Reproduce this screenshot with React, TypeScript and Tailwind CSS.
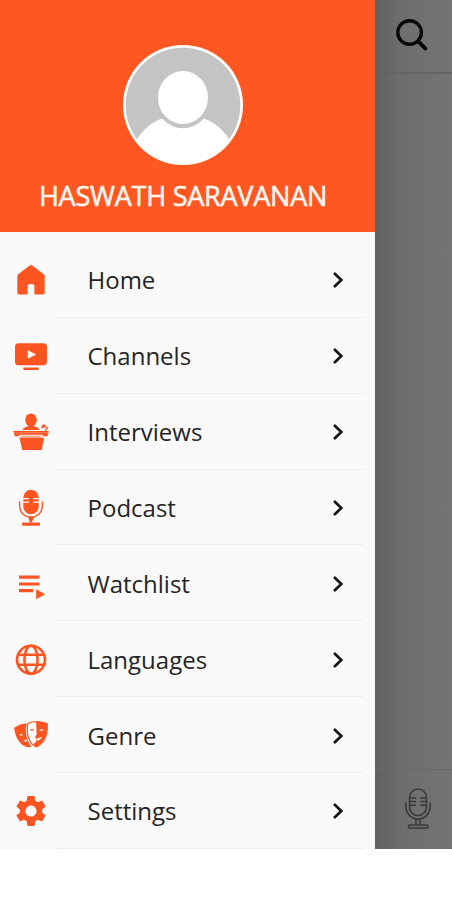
import type { ReactNode } from 'react';

const accent = '#fc5521';

function Icon({ children }: { children: ReactNode }) {
  return (
    <svg className="ml-[11px] h-10 w-10 shrink-0" viewBox="0 0 40 40" fill={accent}>
      {children}
    </svg>
  );
}

const items: { label: string; icon: ReactNode }[] = [
  {
    label: 'Home',
    icon: (
      <path d="M18.4 5.8Q20 4.4 21.6 5.8L32.5 14Q33.7 15 33.7 16.5V32.5Q33.7 34.4 32 34.4H23.4V26Q23.4 23.9 20 23.9T16.6 26V34.4H8Q6.3 34.4 6.3 32.5V16.5Q6.3 15 7.5 14Z" />
    ),
  },
  {
    label: 'Channels',
    icon: (
      <>
        <rect x="4" y="7.3" width="32" height="22" rx="3.6" />
        <rect x="12.3" y="31.6" width="15.6" height="2.4" rx="1" />
        <path d="M16.8 14.2L25.2 18.4L16.8 22.8Z" fill="#fff" />
      </>
    ),
  },
  {
    label: 'Interviews',
    icon: (
      <>
        <ellipse cx="20" cy="8" rx="5.8" ry="6.6" />
        <path d="M11.5 18Q12.3 15.5 17 14.3V12H23V14.3Q28 15.5 28.7 18Z" />
        <path d="M2.2 19H38L36.4 24.2H31.6V22.8H8.4V24.2H3.8Z" />
        <path d="M8.4 25.6H31.6L33 26L30.8 38H11.2L8.6 26Z" />
        <path d="M10 24.2H30" stroke={accent} strokeWidth=".7" />
        <path d="M3 20.7H37" stroke="#ff9c7c" strokeWidth=".6" />
        <path d="M32.4 13.6L36.4 15.8L34 19.5" fill="none" stroke={accent} strokeWidth="1.3" />
        <ellipse cx="32.3" cy="14.2" rx="2.3" ry="1.5" transform="rotate(-32 32.3 14.2)" />
      </>
    ),
  },
  {
    label: 'Podcast',
    icon: (
      <>
        <rect x="12.3" y="1.7" width="15.4" height="24.5" rx="7.7" />
        <path d="M12 10.6H18M12 14.2H18M22 10.6H28M22 14.2H28" stroke="#fafafa" strokeWidth="1.2" />
        <path d="M8.6 14V17.4C8.6 33 31.4 33 31.4 17.4V14" fill="none" stroke={accent} strokeWidth="1.4" strokeLinecap="round" />
        <path d="M17.8 28.5H22.2V31.5L20.8 34.5H19.2L17.8 31.5Z" />
        <rect x="11" y="34.6" width="18" height="3.2" rx=".8" />
      </>
    ),
  },
  {
    label: 'Watchlist',
    icon: (
      <path d="M8 11.6H28.5V14.8H8ZM8 18.4H28.5V21.6H8ZM8 25.1H22V28.3H8ZM25.2 25.2L34.2 30.2L25.2 35.2Z" />
    ),
  },
  {
    label: 'Languages',
    icon: (
      <g fill="none" stroke={accent} strokeWidth="2.6">
        <circle cx="20" cy="19.7" r="14" />
        <ellipse cx="20" cy="19.7" rx="6.6" ry="14" />
        <path d="M7.2 14.7H32.8M7.2 24.7H32.8" />
      </g>
    ),
  },
  {
    label: 'Genre',
    icon: (
      <>
        <path d="M3.2 11.7Q9 7.8 16 7.3C13.8 13 14.4 23.6 20.5 30.5C18 32 13.5 31 9.5 27.2C5.5 23 3.8 17 3.2 11.7Z" />
        <path d="M8 18.8Q9.8 17.3 12 18.9Q10 20.2 8 18.8ZM12.6 25.5Q13.4 23.6 15.3 23.2L16.5 25.5Q14.2 24.8 12.6 25.5Z" fill="#fafafa" />
        <path d="M17.2 7.2Q26 4 36.1 7.6C36.9 16 34.8 26.2 25.3 31C17.4 27.5 14.6 16 17.2 7.2Z" fill="#fff" stroke={accent} strokeWidth="1.2" />
        <path d="M25.1 6Q31 5.5 36 7.6C36.8 16 34.5 26.2 25.5 31L22.2 28.2Q26 26 25.7 22.8L23.5 21.2Q25.5 21 25.6 18Z" />
        <path d="M19 14Q21 12.2 23 14Q21 15.4 19 14Z" />
        <path d="M28.4 14.2Q30.6 12.4 32.8 14.1Q30.6 15.6 28.4 14.2ZM25.8 22.2Q29 22.6 31 20.2Q30 24 26.3 24.8Z" fill="#fff" />
      </>
    ),
  },
  {
    label: 'Settings',
    icon: (
      <path
        transform="translate(1.4 1.4) scale(1.55)"
        d="M19.14 12.94c.04-.3.06-.61.06-.94s-.02-.64-.07-.94l2.03-1.58c.18-.14.23-.41.12-.61l-1.92-3.32c-.12-.22-.37-.29-.59-.22l-2.39.96c-.5-.38-1.03-.7-1.62-.94l-.36-2.54c-.04-.24-.24-.41-.48-.41h-3.84c-.24 0-.43.17-.47.41l-.36 2.54c-.59.24-1.13.57-1.62.94l-2.39-.96c-.22-.08-.47 0-.59.22L2.74 8.87c-.12.21-.08.47.12.61l2.03 1.58c-.05.3-.09.63-.09.94s.02.64.07.94l-2.03 1.58c-.18.14-.23.41-.12.61l1.92 3.32c.12.22.37.29.59.22l2.39-.96c.5.38 1.03.7 1.62.94l.36 2.54c.05.24.24.41.48.41h3.84c.24 0 .44-.17.47-.41l.36-2.54c.59-.24 1.13-.56 1.62-.94l2.39.96c.22.08.47 0 .59-.22l1.92-3.32c.12-.22.07-.47-.12-.61l-2.01-1.58zM12 15.6c-1.98 0-3.6-1.62-3.6-3.6s1.62-3.6 3.6-3.6 3.6 1.62 3.6 3.6-1.62 3.6-3.6 3.6z"
      />
    ),
  },
];

function Avatar() {
  return (
    <svg className="h-[122px] w-[122px]" viewBox="0 0 122 122">
      <defs>
        <clipPath id="face"><circle cx="61" cy="61" r="58" /></clipPath>
      </defs>
      <circle cx="61" cy="61" r="60" fill="#fff" />
      <circle cx="61" cy="61" r="57.3" fill="#c4c4c4" />
      <g clipPath="url(#face)">
        <path d="M12 101C21 81 39 71 61 71S101 81 110 101L100 122H22Z" fill="#fff" />
        <ellipse cx="61" cy="54.5" rx="28" ry="29.8" fill="#c4c4c4" />
        <ellipse cx="61" cy="53.5" rx="25" ry="26.6" fill="#fff" />
      </g>
    </svg>
  );
}

export default function App() {
  return (
    <div className="h-[900px] w-[452px] overflow-hidden bg-white font-['Open_Sans','Noto_Sans',sans-serif]">
      <div className="flex h-[849px]">
        <aside className="flex w-[375px] shrink-0 flex-col bg-[#fafafa]">
          <header className="flex h-[232px] shrink-0 flex-col items-center bg-[#ff5722] pt-[44px] pr-[9px]">
            <Avatar />
            <h1 className="mt-[12px] text-[27px] leading-[36px] tracking-[-0.23px] whitespace-nowrap text-[#fff5ee] [-webkit-text-stroke:0.6px_#fff5ee]">HASWATH SARAVANAN</h1>
          </header>
          <nav className="pt-[10px]">
            {items.map(({ label, icon }) => (
              <div key={label} className="flex h-[75.86px] flex-col">
                <a className="flex min-h-0 flex-1 items-center pt-[2px]">
                  <Icon>{icon}</Icon>
                  <span className="ml-[36.5px] flex-1 text-[24px] leading-[34px] text-[#252525]">{label}</span>
                  <svg className="mr-[25px] h-6 w-6" viewBox="0 0 24 24" fill="none" stroke="#161616" strokeWidth="2.7">
                    <path d="M8 5L15.3 12L8 19" />
                  </svg>
                </a>
                <div className="mr-[10px] ml-[57px] h-px bg-[#eeeeee]" />
              </div>
            ))}
          </nav>
        </aside>
        <div className="flex flex-1 flex-col bg-linear-to-r from-[#606060] via-[#6e6e6e] via-35% to-[#747474]">
          <div className="flex h-[74px] justify-center border-b-2 border-[#646464] pt-[17px] pr-[3px]">
            <svg className="h-9 w-9" viewBox="0 0 36 36" fill="none" stroke="#080808">
              <circle cx="15.6" cy="15.5" r="11.8" strokeWidth="3.4" />
              <path d="M24.2 24.4L31.2 31.4" strokeWidth="4" strokeLinecap="round" />
            </svg>
          </div>
          <div className="flex-1" />
          <div className="flex h-[80px] justify-center border-t border-[#696969] pt-[17px] pl-[8px]">
            <svg className="h-11 w-8" viewBox="0 0 32 44" fill="none" stroke="#383838" strokeWidth="1.5">
              <rect x="7.5" y="2" width="17" height="26.5" rx="8.5" />
              <path d="M8 11H14M8 14.6H14M8 18.2H14M18.5 11H24.5M18.5 14.6H24.5M18.5 18.2H24.5M3.8 15.5V18.5C3.8 36.5 28.2 36.5 28.2 18.5V15.5M14 32V38M18 32V38" />
              <rect x="6.5" y="38" width="19.5" height="3" rx="1" />
            </svg>
          </div>
        </div>
      </div>
    </div>
  );
}
